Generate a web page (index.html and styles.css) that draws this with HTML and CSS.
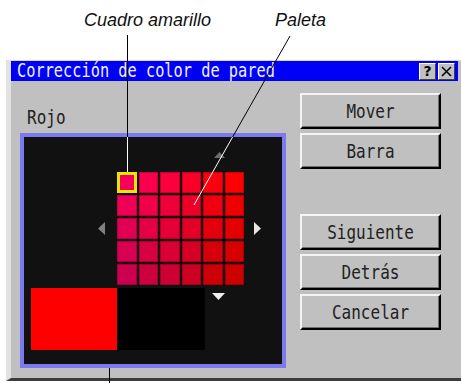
FILE: index.html
```html
<!DOCTYPE html>
<html lang="es">
<head>
    <meta charset="UTF-8">
    <meta name="viewport" content="width=device-width, initial-scale=1.0">
    <title>Corrección de color de pared</title>
    <link rel="stylesheet" href="styles.css">
</head>
<body>

<div class="captions">
    <span class="caption">Cuadro amarillo</span>
    <span class="caption caption-paleta">Paleta</span>
</div>

<div class="window">
    <div class="titlebar">
        <span class="title-text tall">Corrección de color de pared</span>
        <div class="title-buttons">
            <span class="tb-btn tb-help">?</span>
            <span class="tb-btn">
                <svg width="11" height="11" viewBox="0 0 11 11"><path d="M1 1 L10 10 M10 1 L1 10" stroke="#000" stroke-width="1.6"/></svg>
            </span>
        </div>
    </div>

    <div class="dialog-body">
        <div class="left-col">
            <div class="label"><span class="tall">Rojo</span></div>
            <div class="panel">
                <div class="row-up">
                    <svg class="arrow-up" width="11" height="6" viewBox="0 0 11 6"><polygon points="0,6 5.5,0 11,6" fill="#6c6c6c"/></svg>
                </div>
                <div class="row-mid">
                    <svg class="arrow-left" width="7" height="13" viewBox="0 0 7 13"><polygon points="7,0 0,6.5 7,13" fill="#808080"/></svg>
                    <div class="palette">
                        <div class="cell selected" style="background:#f7005c"></div>
                        <div class="cell" style="background:#fa004c"></div>
                        <div class="cell" style="background:#fa003c"></div>
                        <div class="cell" style="background:#fa0028"></div>
                        <div class="cell" style="background:#fc0010"></div>
                        <div class="cell" style="background:#ff0000"></div>

                        <div class="cell" style="background:#ee0058"></div>
                        <div class="cell" style="background:#f00048"></div>
                        <div class="cell" style="background:#ee0038"></div>
                        <div class="cell" style="background:#ec0028"></div>
                        <div class="cell" style="background:#ee000e"></div>
                        <div class="cell" style="background:#ee0000"></div>

                        <div class="cell" style="background:#e20055"></div>
                        <div class="cell" style="background:#e40046"></div>
                        <div class="cell" style="background:#e40036"></div>
                        <div class="cell" style="background:#e20026"></div>
                        <div class="cell" style="background:#e2000c"></div>
                        <div class="cell" style="background:#e20000"></div>

                        <div class="cell" style="background:#d80052"></div>
                        <div class="cell" style="background:#d80044"></div>
                        <div class="cell" style="background:#d80034"></div>
                        <div class="cell" style="background:#d60024"></div>
                        <div class="cell" style="background:#d6000a"></div>
                        <div class="cell" style="background:#d60000"></div>

                        <div class="cell" style="background:#cc004e"></div>
                        <div class="cell" style="background:#cc0040"></div>
                        <div class="cell" style="background:#cc0032"></div>
                        <div class="cell" style="background:#cc0022"></div>
                        <div class="cell" style="background:#cc0008"></div>
                        <div class="cell" style="background:#cc0000"></div>
                    </div>
                    <svg class="arrow-right" width="7" height="13" viewBox="0 0 7 13"><polygon points="0,0 7,6.5 0,13" fill="#e6e6e6"/></svg>
                </div>
                <div class="row-bottom">
                    <div class="swatch swatch-new"></div>
                    <div class="swatch swatch-old"></div>
                    <svg class="arrow-down" width="13" height="7" viewBox="0 0 13 7"><polygon points="0,0 13,0 6.5,7" fill="#eeeeee"/></svg>
                </div>
            </div>
        </div>

        <div class="right-col">
            <button class="btn"><span class="tall">Mover</span></button>
            <button class="btn"><span class="tall">Barra</span></button>
            <button class="btn btn-gap"><span class="tall">Siguiente</span></button>
            <button class="btn"><span class="tall">Detrás</span></button>
            <button class="btn"><span class="tall">Cancelar</span></button>
        </div>
    </div>
</div>

<!-- lineas de las etiquetas -->
<svg class="leaders" width="461" height="383" viewBox="0 0 461 383">
    <line x1="127.5" y1="35" x2="127.5" y2="137" stroke="#000" stroke-width="1"/>
    <line x1="127.5" y1="137" x2="127.5" y2="172" stroke="#fff" stroke-width="1"/>
    <line x1="290" y1="36" x2="232.6" y2="137" stroke="#000" stroke-width="1"/>
    <line x1="232.6" y1="137" x2="194" y2="205" stroke="#fff" stroke-width="1"/>
    <line x1="109.5" y1="368" x2="109.5" y2="383" stroke="#000" stroke-width="1"/>
</svg>

</body>
</html>
```
FILE: styles.css
```css
body {
    margin: 0;
    width: 461px;
    height: 383px;
    overflow: hidden;
    background: #fff;
    position: relative;
    font-family: "DejaVu Sans Mono", monospace;
}

.captions {
    display: flex;
    padding: 10px 0 0 84px;
    height: 21px;
    font-family: "Liberation Sans", Arial, sans-serif;
    font-style: italic;
    font-size: 18px;
    line-height: 21px;
    color: #111;
}

.caption-paleta {
    margin-left: 64px;
}

/* el texto del proyector es alto y estrecho */
.tall {
    display: inline-block;
    transform: scaleY(1.22);
}

.window {
    margin: 29px 0 0 6px;
    width: 460px;
    border-left: 5px solid #e2e2e2;
    border-top: 1px solid #d8d8d8;
    border-bottom: 3px solid #3c3c3c;
    background: #c0c0c0;
}

.titlebar {
    display: flex;
    align-items: center;
    justify-content: space-between;
    height: 20px;
    width: 447px;
    padding-left: 6px;
    box-sizing: border-box;
    background: #0000f6;
}

.title-text {
    color: #f0f0ff;
    font-size: 15.3px;
    line-height: 20px;
}

.title-buttons {
    display: flex;
    gap: 2px;
    margin-right: 3px;
}

.tb-btn {
    width: 17px;
    height: 17px;
    box-sizing: border-box;
    display: flex;
    align-items: center;
    justify-content: center;
    background: #c0c0c0;
    border: 1px solid;
    border-color: #fff #404040 #404040 #fff;
}

.tb-help {
    font-family: "DejaVu Sans", sans-serif;
    font-weight: bold;
    font-size: 14px;
    color: #000;
}

.dialog-body {
    display: flex;
}

.left-col {
    padding: 25px 0 10px 9px;
}

.label {
    height: 18px;
    line-height: 18px;
    font-size: 16px;
    color: #202020;
    padding: 3px 0 0 7px;
    margin-bottom: 6px;
}

.panel {
    width: 258px;
    height: 227px;
    border: 4px solid #7b7bef;
    background: #111;
}

.row-up {
    padding: 15px 0 0 190px;
    height: 6px;
}

.arrow-up,
.arrow-left,
.arrow-right,
.arrow-down {
    display: block;
}

.row-mid {
    display: flex;
    align-items: center;
    margin-top: 14px;
}

.arrow-left {
    margin-left: 74px;
}

.palette {
    display: grid;
    grid-template-columns: repeat(6, 1fr);
    grid-template-rows: repeat(5, 1fr);
    gap: 2px;
    width: 127px;
    height: 113px;
    margin-left: 12px;
    background: #1e0508;
}

.cell {
    box-shadow: inset 0 0 0 1px rgba(0, 0, 0, 0.22);
}

.cell.selected {
    box-shadow: inset 0 0 0 3px #e8e800;
}

.arrow-right {
    margin-left: 10px;
}

.row-bottom {
    display: flex;
    align-items: flex-start;
    margin: 3px 0 0 7px;
}

.swatch {
    height: 62px;
}

.swatch-new {
    width: 86px;
    background: #ff0000;
}

.swatch-old {
    width: 88px;
    background: #000;
}

.arrow-down {
    margin: 5px 0 0 7px;
}

.right-col {
    display: flex;
    flex-direction: column;
    padding-top: 12px;
    margin-left: 14px;
}

.btn {
    width: 141px;
    height: 36px;
    margin-bottom: 4px;
    padding: 0;
    font-family: "DejaVu Sans Mono", monospace;
    font-size: 16px;
    color: #222;
    background: #c0c0c0;
    border: 2px solid;
    border-color: #f4f4f4 #000 #000 #f4f4f4;
    box-shadow: inset -1px -1px 0 #707070;
}

.btn-gap {
    margin-top: 41px;
}

.leaders {
    position: absolute;
    left: 0;
    top: 0;
    pointer-events: none;
}
```
